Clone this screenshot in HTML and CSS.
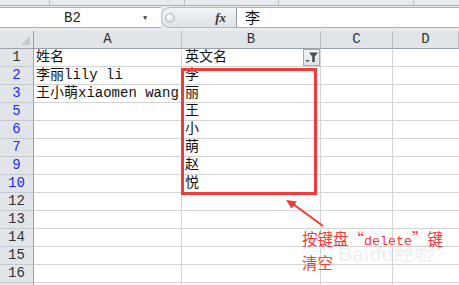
FILE: index.html
```html
<!DOCTYPE html>
<html lang="zh-CN">
<head>
  <meta charset="UTF-8" />
  <title>筛选后清空</title>
  <link rel="stylesheet" href="styles.css">
</head>
<body>

  <!-- ribbon edge -->
  <div class="ribbon">
    <span class="tab" style="width:50px"></span>
    <span class="tab" style="width:135px"></span>
    <span class="tab" style="width:94px"></span>
    <span class="tab" style="width:135px"></span>
  </div>

  <!-- formula bar -->
  <div class="fbar">
    <div class="namebox">
      <span class="ref">B2</span>
      <span class="drop">&#9660;</span>
    </div>
    <div class="fxzone">
      <span class="knob"></span>
      <span class="fx">fx</span>
    </div>
    <div class="input">李</div>
  </div>

  <!-- sheet -->
  <div class="sheet">
    <div class="row head">
      <div class="rh corner"></div>
      <div class="cell a">A</div>
      <div class="cell b">B</div>
      <div class="cell c">C</div>
      <div class="cell d">D</div>
    </div>
    <div class="row">
      <div class="rh">1</div>
      <div class="cell a">姓名</div>
      <div class="cell b">英文名<span class="filter"><svg width="15" height="15" viewBox="0 0 15 15"><path d="M5 2.5h9l-3.2 4V12H8.2V6.5z" fill="#4b4f54"/><path d="M1.5 10h4l-2 2.3z" fill="#4b4f54"/></svg></span></div>
      <div class="cell c"></div>
      <div class="cell d"></div>
    </div>
    <div class="row">
      <div class="rh blue">2</div>
      <div class="cell a">李丽lily li</div>
      <div class="cell b">李</div>
      <div class="cell c"></div>
      <div class="cell d"></div>
    </div>
    <div class="row">
      <div class="rh blue">3</div>
      <div class="cell a">王小萌xiaomen wang</div>
      <div class="cell b">丽</div>
      <div class="cell c"></div>
      <div class="cell d"></div>
    </div>
    <div class="row">
      <div class="rh blue">5</div>
      <div class="cell a"></div>
      <div class="cell b">王</div>
      <div class="cell c"></div>
      <div class="cell d"></div>
    </div>
    <div class="row">
      <div class="rh blue">6</div>
      <div class="cell a"></div>
      <div class="cell b">小</div>
      <div class="cell c"></div>
      <div class="cell d"></div>
    </div>
    <div class="row">
      <div class="rh blue">7</div>
      <div class="cell a"></div>
      <div class="cell b">萌</div>
      <div class="cell c"></div>
      <div class="cell d"></div>
    </div>
    <div class="row">
      <div class="rh blue">9</div>
      <div class="cell a"></div>
      <div class="cell b">赵</div>
      <div class="cell c"></div>
      <div class="cell d"></div>
    </div>
    <div class="row">
      <div class="rh blue">10</div>
      <div class="cell a"></div>
      <div class="cell b">悦</div>
      <div class="cell c"></div>
      <div class="cell d"></div>
    </div>
    <div class="row">
      <div class="rh">12</div>
      <div class="cell a"></div>
      <div class="cell b"></div>
      <div class="cell c"></div>
      <div class="cell d"></div>
    </div>
    <div class="row">
      <div class="rh">13</div>
      <div class="cell a"></div>
      <div class="cell b"></div>
      <div class="cell c"></div>
      <div class="cell d"></div>
    </div>
    <div class="row">
      <div class="rh">14</div>
      <div class="cell a"></div>
      <div class="cell b"></div>
      <div class="cell c"></div>
      <div class="cell d"></div>
    </div>
    <div class="row">
      <div class="rh">15</div>
      <div class="cell a"></div>
      <div class="cell b"></div>
      <div class="cell c"></div>
      <div class="cell d"></div>
    </div>
    <div class="row">
      <div class="rh">16</div>
      <div class="cell a"></div>
      <div class="cell b"></div>
      <div class="cell c"></div>
      <div class="cell d"></div>
    </div>
    <div class="row">
      <div class="rh"></div>
      <div class="cell a"></div>
      <div class="cell b"></div>
      <div class="cell c"></div>
      <div class="cell d"></div>
    </div>

    <!-- annotation overlay -->
    <div class="mark"></div>
    <svg class="arrow" width="459" height="254" viewBox="0 0 459 254">
      <line x1="323" y1="195" x2="293" y2="173" stroke="#f23a3a" stroke-width="2"/>
      <path d="M286 169l11 1.5-5.5 7z" fill="#f23a3a"/>
    </svg>
    <div class="note">按键盘“<span class="lat">delete</span>”键<br>清空</div>
    <div class="wm">Bai<b>du</b>经验</div>
  </div>

</body>
</html>
```

FILE: styles.css
```css
* { box-sizing: border-box; }
body {
  margin: 0;
  width: 459px;
  height: 285px;
  overflow: hidden;
  background: #fff;
  font-family: 'Liberation Mono', 'Noto Sans CJK SC', monospace;
  font-size: 14px;
  color: #111;
}

/* ribbon edge */
.ribbon {
  display: flex;
  height: 6px;
  background: #e6e9ed;
  border-bottom: 1px solid #a9afb7;
}
.tab {
  border-right: 1px solid #b9bec5;
}

/* formula bar */
.fbar {
  display: flex;
  height: 25px;
  padding: 1px 0 3px;
  background: #e9ecef;
}
.namebox {
  display: flex;
  align-items: center;
  width: 161px;
  background: #fff;
  border-top: 1px solid #a9afb7;
  border-bottom: 1px solid #a9afb7;
}
.ref {
  flex: 1;
  text-align: center;
  padding-left: 2px;
  font-size: 14px;
  color: #222;
}
.drop {
  width: 18px;
  font-size: 7px;
  color: #444;
}
.fxzone {
  display: flex;
  align-items: center;
  justify-content: space-between;
  width: 76px;
  padding: 0 10px 0 3px;
  background: linear-gradient(#f2f4f6, #dfe3e8);
  border: 1px solid #b3b9c1;
  border-right-color: #8e959e;
  border-radius: 9px 0 0 9px;
}
.knob {
  width: 10px;
  height: 10px;
  border-radius: 50%;
  background: radial-gradient(circle at 40% 35%, #fff, #c9ced4);
  border: 1px solid #b7bdc4;
}
.fx {
  font-family: 'Liberation Serif', serif;
  font-style: italic;
  font-weight: bold;
  font-size: 13px;
  color: #333;
}
.input {
  flex: 1;
  padding: 0 0 0 8px;
  line-height: 17px;
  background: #fff;
  border-top: 1px solid #a9afb7;
  border-bottom: 1px solid #a9afb7;
  font-family: 'Noto Sans CJK SC', sans-serif;
  font-size: 15px;
}

/* sheet */
.sheet {
  position: relative;
}
.row {
  display: flex;
  height: 18px;
}
.rh, .cell {
  height: 18px;
  line-height: 17px;
  border-right: 1px solid #d4d4d4;
  border-bottom: 1px solid #d4d4d4;
  white-space: nowrap;
  overflow: hidden;
}
.rh {
  width: 34px;
  text-align: center;
  background: #e1e5ea;
  border-right: 1px solid #9aa2ab;
  border-bottom: 1px solid #c5cad1;
  color: #333;
}
.rh.blue { color: #1c2cf2; }
.cell { padding-left: 2px; }
.a { width: 148px; }
.b { width: 139px; padding-left: 3px; position: relative; }
.c { width: 72px; }
.d { flex: 1; border-right: none; }

.head .cell {
  background: #e1e5ea;
  border-right: 1px solid #b8bec6;
  border-bottom: 1px solid #9aa2ab;
  text-align: center;
  padding-left: 0;
  color: #333;
}
.head .rh { border-bottom-color: #9aa2ab; }
.corner {
  position: relative;
}
.corner::after {
  content: "";
  position: absolute;
  right: 3px;
  bottom: 3px;
  border-left: 9px solid transparent;
  border-bottom: 9px solid #c4c9cf;
}

.filter {
  position: absolute;
  right: 0;
  top: 0;
  width: 17px;
  height: 17px;
  background: linear-gradient(#f4f5f7, #dfe2e6);
  border: 1px solid #a2a9b1;
}
.filter svg { display: block; }

/* annotation */
.mark {
  position: absolute;
  left: 181px;
  top: 37px;
  width: 136px;
  height: 127px;
  border: 3px solid #f23a3a;
}
.arrow {
  position: absolute;
  left: 0;
  top: 0;
}
.note {
  position: absolute;
  left: 302px;
  top: 197px;
  font-family: 'Noto Sans CJK SC', sans-serif;
  font-size: 15.5px;
  line-height: 21px;
  color: #f23a3a;
}
.lat {
  font-family: 'Liberation Mono', monospace;
  font-size: 13.3px;
}
.wm {
  position: absolute;
  left: 338px;
  top: 212px;
  color: rgba(0, 0, 0, 0.06);
  font-family: 'Liberation Sans', sans-serif;
  font-size: 20px;
  font-weight: bold;
  line-height: 22px;
}
```
